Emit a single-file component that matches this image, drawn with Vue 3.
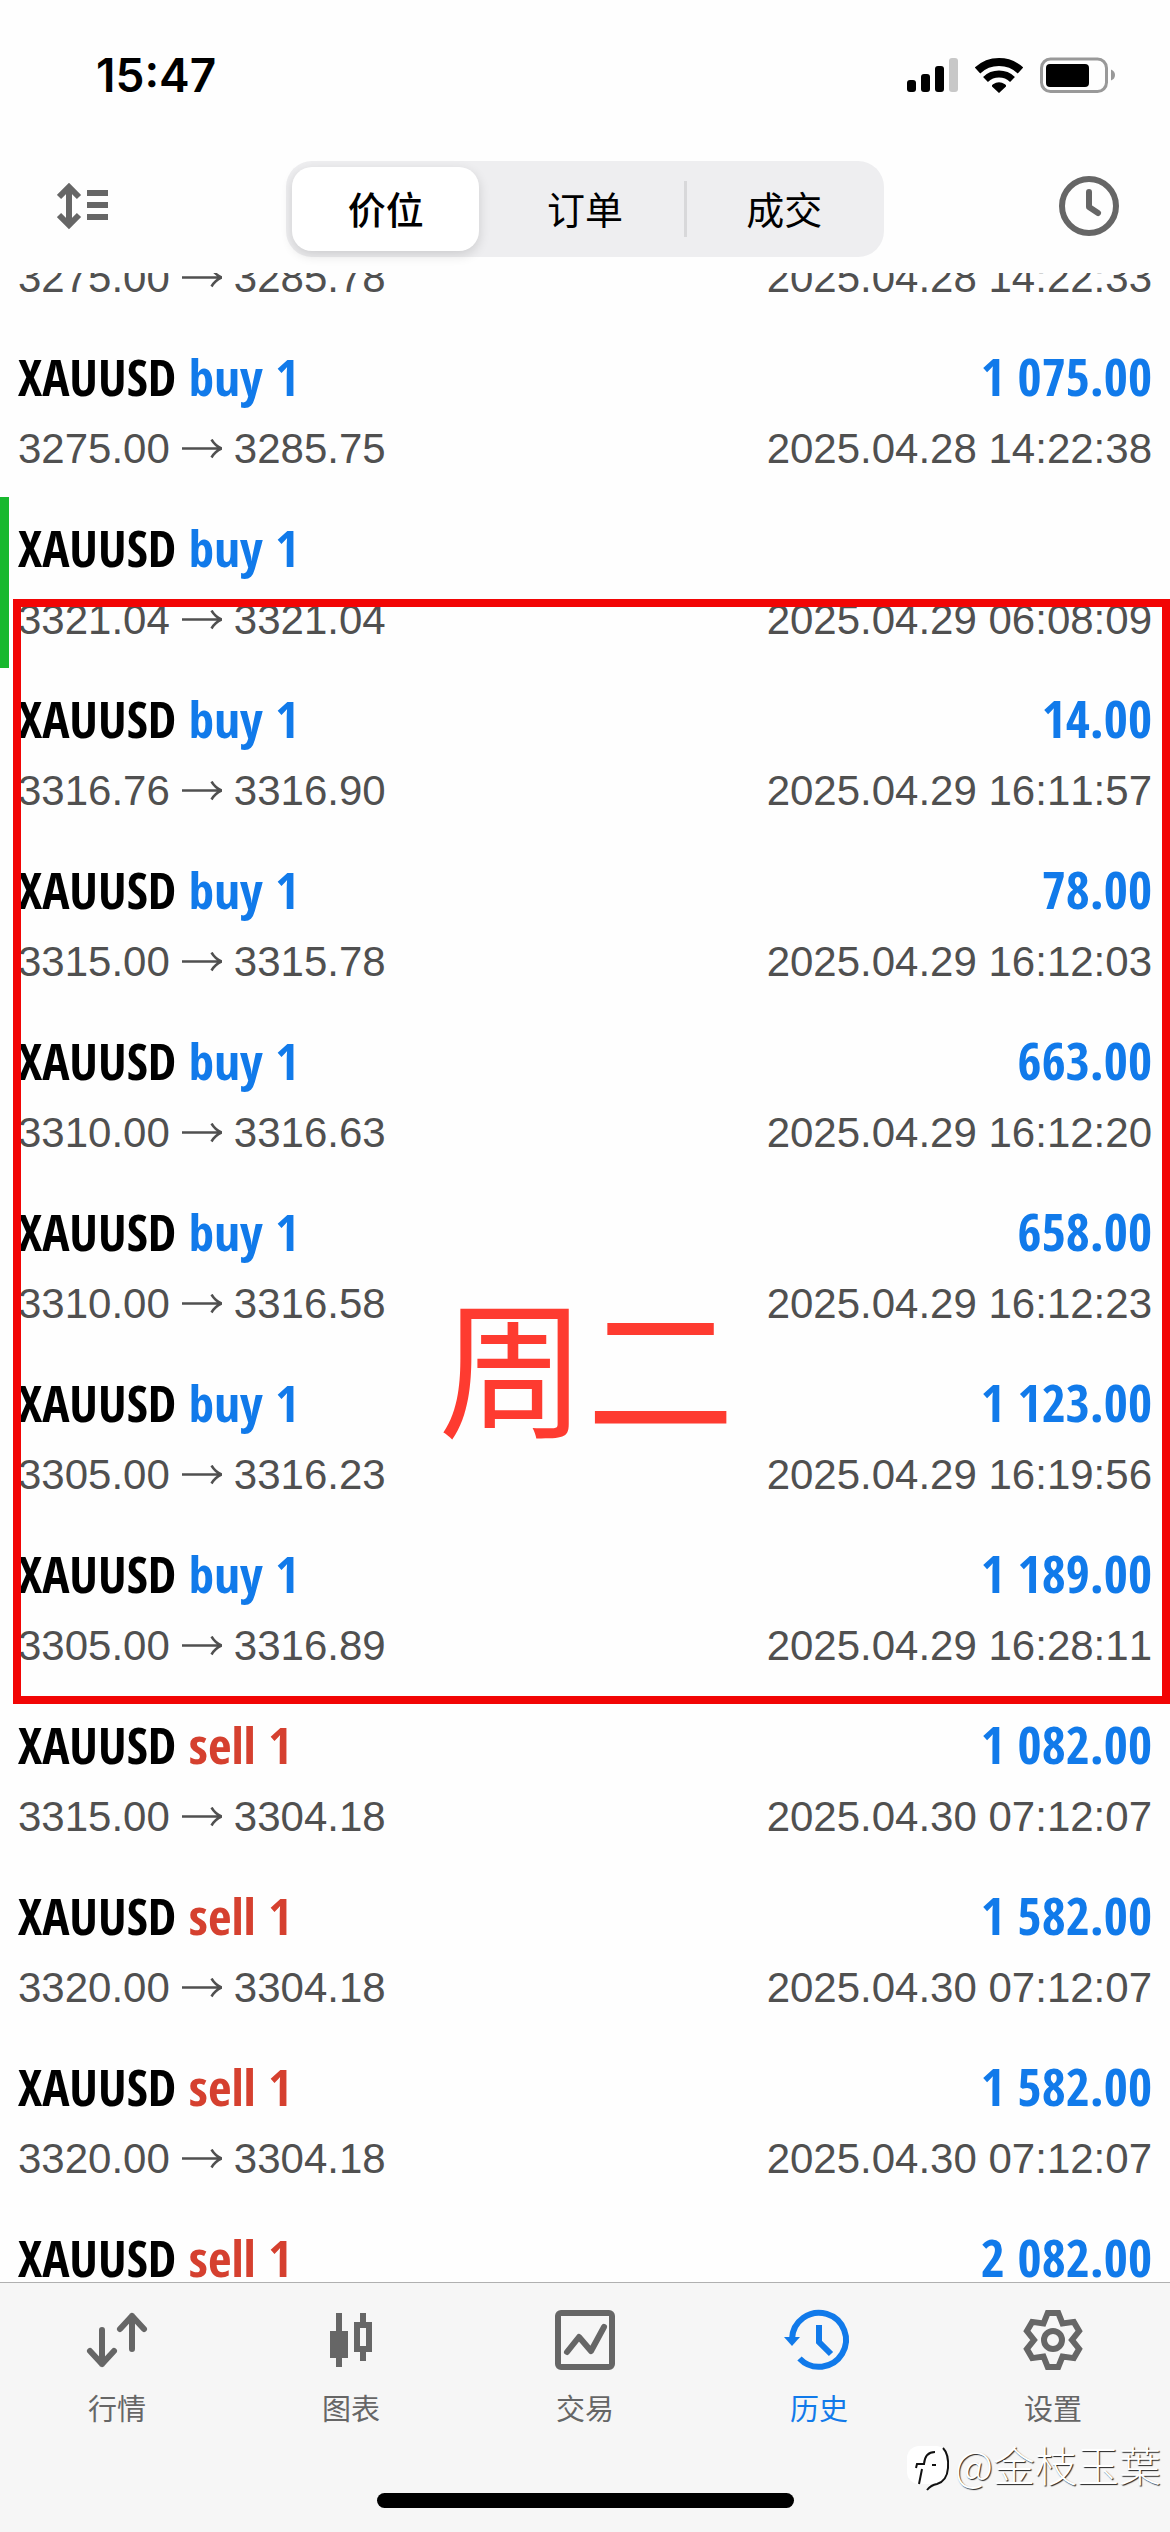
<script setup>
import { ref } from 'vue'

const segments = ['价位', '订单', '成交']
const segment = ref('价位')

const deals = [
  ['buy', '1 075.00', '3275.00', '3285.78', '2025.04.28 14:22:33'],
  ['buy', '1 075.00', '3275.00', '3285.75', '2025.04.28 14:22:38'],
  ['buy', '', '3321.04', '3321.04', '2025.04.29 06:08:09'],
  ['buy', '14.00', '3316.76', '3316.90', '2025.04.29 16:11:57'],
  ['buy', '78.00', '3315.00', '3315.78', '2025.04.29 16:12:03'],
  ['buy', '663.00', '3310.00', '3316.63', '2025.04.29 16:12:20'],
  ['buy', '658.00', '3310.00', '3316.58', '2025.04.29 16:12:23'],
  ['buy', '1 123.00', '3305.00', '3316.23', '2025.04.29 16:19:56'],
  ['buy', '1 189.00', '3305.00', '3316.89', '2025.04.29 16:28:11'],
  ['sell', '1 082.00', '3315.00', '3304.18', '2025.04.30 07:12:07'],
  ['sell', '1 582.00', '3320.00', '3304.18', '2025.04.30 07:12:07'],
  ['sell', '1 582.00', '3320.00', '3304.18', '2025.04.30 07:12:07'],
  ['sell', '2 082.00', '', '', ''],
].map(([side, profit, open, close, time]) => ({ side, profit, open, close, time }))

const tabs = [
  { id: 'quotes', label: '行情' },
  { id: 'chart', label: '图表' },
  { id: 'trade', label: '交易' },
  { id: 'history', label: '历史' },
  { id: 'settings', label: '设置' },
]
const activeTab = 'history'

// Gear outline: six teeth, each two outer corners followed by a valley
const polar = (r, deg) => {
  const a = ((deg - 90) * Math.PI) / 180
  return `${(32 + r * Math.cos(a)).toFixed(2)},${(32 + r * Math.sin(a)).toFixed(2)}`
}
const gear = [0, 60, 120, 180, 240, 300]
  .map((d) => [polar(27.6, d - 11), polar(27.6, d + 11), polar(19, d + 30)].join(' '))
  .join(' ')
</script>

<template>
  <div class="screen">
    <header class="top">
      <div class="status">
        <span class="time">15:47</span>
        <div class="status-icons">
          <svg width="51" height="36" viewBox="0 0 51 36" aria-hidden="true">
            <rect x="0" y="23" width="9" height="12" rx="3" />
            <rect x="14" y="17" width="9" height="18" rx="3" />
            <rect x="28" y="9" width="9" height="26" rx="3" />
            <rect x="42" y="1" width="9" height="34" rx="3" fill="#c8c8c8" />
          </svg>
          <svg width="48" height="36" viewBox="0 0 48 36" fill="none" stroke="#000" aria-hidden="true">
            <path d="M2.5 13.5A31.5 31.5 0 0 1 45.500 13.500" stroke-width="8" />
            <path d="M10.500 22.500A19.500 19.500 0 0 1 37.500 22.500" stroke-width="7" />
            <path d="M24 36L17 29.500Q16.500 28 18 27.200Q24 23.500 30 27.200Q31.500 28 31 29.500Z" fill="#000" stroke="none" />
          </svg>
          <svg width="75" height="36" viewBox="0 0 75 36" aria-hidden="true">
            <rect x="1.500" y="2" width="65" height="32.500" rx="9" fill="none" stroke="#999" stroke-width="3" />
            <rect x="6" y="7" width="43" height="23" rx="4" />
            <path d="M71 12.500Q75 14 75 18T71 23.500Z" fill="#999" />
          </svg>
        </div>
      </div>
      <nav class="nav">
        <button class="icon-button start" type="button" aria-label="排序">
          <svg width="51" height="48" viewBox="0 0 51 48" fill="none" stroke="#666" stroke-width="6" aria-hidden="true">
            <path d="M12 5V43M2 15L12 5L22 15M2 33L12 43L22 33M30 11H51M30 23H51M30 35H51" />
          </svg>
        </button>
        <div class="segmented">
          <button
            v-for="s in segments"
            :key="s"
            type="button"
            :class="['segment', { selected: s === segment }]"
            @click="segment = s"
          >{{ s }}</button>
        </div>
        <button class="icon-button end" type="button" aria-label="时间">
          <svg width="60" height="60" viewBox="0 0 60 60" fill="none" stroke="#666" stroke-width="6" stroke-linecap="round" stroke-linejoin="round" aria-hidden="true">
            <circle cx="30" cy="30" r="27" />
            <path d="M30 16V31L39 37" />
          </svg>
        </button>
      </nav>
    </header>

    <main class="viewport">
      <div class="history">
        <ul class="deals">
          <li v-for="(d, i) in deals" :key="i" :class="['deal', { marked: !d.profit }]">
            <div class="line title">
              <span>XAUUSD <span :class="d.side">{{ d.side }} 1</span></span>
              <span class="profit">{{ d.profit }}</span>
            </div>
            <div v-if="d.open" class="line detail">
              <span class="prices">
                {{ d.open }}
                <svg width="40" height="20" viewBox="0 0 40 20" fill="none" stroke="#505050" stroke-width="2.5" aria-hidden="true">
                  <path d="M0 9.500H38.500M29.500 0.500Q33 6.500 39.500 9.500Q33 12.500 29.500 18.500" />
                </svg>
                {{ d.close }}
              </span>
              <time>{{ d.time }}</time>
            </div>
          </li>
        </ul>
        <div class="annotation"><span>周二</span></div>
      </div>
    </main>

    <footer class="bottom">
      <nav class="tabs">
        <a v-for="t in tabs" :key="t.id" href="#" :class="['tab', { active: t.id === activeTab }]">
          <svg width="64" height="64" viewBox="0 0 64 64" fill="none" stroke="currentColor" stroke-width="6" aria-hidden="true">
            <path v-if="t.id === 'quotes'" d="M17 22V56M5 43L17 56L29 43M47 41V8M35 21L47 8L59 21" stroke-linecap="round" stroke-linejoin="round" />
            <template v-else-if="t.id === 'chart'">
              <path d="M20 5V59M44 5V15M44 43V53M38 17H50V41H38Z" />
              <rect x="11" y="23" width="18" height="27" fill="currentColor" stroke="none" />
            </template>
            <template v-else-if="t.id === 'trade'">
              <rect x="5" y="5" width="54" height="54" rx="3" />
              <path d="M14 44L26 29L38 43L51 19" stroke-linecap="round" stroke-linejoin="round" />
            </template>
            <template v-else-if="t.id === 'history'">
              <path d="M5 31A27 27 0 1 1 12.500 50.500M32 17V34L44 46" />
              <path d="M-3 29H13L5 38Z" fill="currentColor" stroke="none" />
            </template>
            <template v-else>
              <polygon :points="gear" />
              <circle cx="32" cy="32" r="9" />
            </template>
          </svg>
          <span>{{ t.label }}</span>
        </a>
      </nav>
      <div class="home-bar"></div>
      <div class="watermark">
        <svg width="44" height="48" viewBox="0 0 44 48" aria-hidden="true">
          <rect x="0" y="2" width="41" height="38" rx="12" fill="#fff" />
          <path d="M36 4Q42 10 41 24Q40 37 30 40Q24 41 20 46" fill="none" stroke="#111" stroke-width="2" />
          <path d="M28 8Q18 8 17 20H10L9 24M15 25L12 40M25 21H29" fill="none" stroke="#111" stroke-width="2" />
        </svg>
        <span>@金枝玉葉</span>
      </div>
    </footer>
  </div>
</template>

<style>
body {
  margin: 0;
  background: #fff;
}
</style>

<style scoped>
.screen {
  display: flex;
  flex-direction: column;
  height: 100vh;
  overflow: hidden;
  background: #fefefe;
  color: #000;
  font-family: "Liberation Sans", "Noto Sans CJK SC", sans-serif;
}

.status {
  display: flex;
  align-items: center;
  justify-content: space-between;
  height: 150px;
  padding: 0 55px 0 96px;
}

.time {
  font-family: Inter, sans-serif;
  font-size: 46px;
  font-weight: 600;
}

.status-icons {
  display: flex;
  gap: 17px;
}

.nav {
  display: grid;
  grid-template-columns: 1fr 56% 1fr;
  align-items: center;
  padding: 11px 51px 16px;
}

.icon-button {
  display: flex;
  padding: 0 0 6px;
  border: 0;
  background: none;
}

.start {
  justify-self: start;
  padding-left: 6px;
}

.end {
  justify-self: end;
}

.segmented {
  display: grid;
  grid-template-columns: repeat(3, 1fr);
  height: 96px;
  border-radius: 26px;
  background: #eeeef0;
}

.segment {
  position: relative;
  margin: 6px;
  padding: 0 0 2px;
  border: 0;
  border-radius: 20px;
  background: none;
  color: #000;
  font-family: "Noto Sans CJK SC", sans-serif;
  font-size: 38px;
  line-height: 56px;
}

.segment.selected {
  background: #fff;
  box-shadow: 0 4px 12px rgba(0, 0, 0, 0.14);
  font-weight: 500;
}

.segment:last-child::before {
  content: "";
  position: absolute;
  top: 14px;
  bottom: 14px;
  left: -7px;
  width: 3px;
  background: #d8d8da;
}

.viewport {
  flex: 1;
  min-height: 0;
  overflow: hidden;
}

/* The list is scrolled part of the way through its first row */
.history {
  position: relative;
  margin-top: -118px;
}

.deals {
  margin: 0;
  padding: 0;
  list-style: none;
}

.deal {
  position: relative;
  padding: 20px 18px 23px;
}

.marked::before {
  content: "";
  position: absolute;
  top: 0;
  bottom: 0;
  left: 0;
  width: 9px;
  background: #18b82e;
}

.line {
  display: flex;
  justify-content: space-between;
  white-space: nowrap;
}

.title {
  height: 60px;
  margin-bottom: 18px;
  font-family: "Open Sans Condensed", sans-serif;
  font-size: 51px;
  font-weight: 700;
  line-height: 60px;
}

.buy,
.profit {
  color: #117aea;
}

.profit {
  font-size: 52px;
}

.sell {
  color: #d5402f;
}

.detail {
  color: #505050;
  font-size: 42px;
  font-kerning: none;
  line-height: 50px;
}

.prices {
  display: flex;
  align-items: center;
  gap: 12px;
}

.annotation {
  position: absolute;
  top: 444px;
  right: 0;
  left: 13px;
  height: 1089px;
  border: 8px solid #f20505;
}

.annotation span {
  position: absolute;
  top: 681px;
  right: 10px;
  left: 0;
  color: #fe3b30;
  font-family: "Noto Sans CJK SC", sans-serif;
  font-size: 148px;
  line-height: 148px;
  text-align: center;
}

.bottom {
  position: relative;
  border-top: 1px solid #b0b0b0;
  background: #f6f6f6;
}

.tabs {
  display: grid;
  grid-template-columns: repeat(5, 1fr);
  padding-top: 25px;
}

.tab {
  display: flex;
  flex-direction: column;
  align-items: center;
  gap: 17px;
  color: #666;
  font-family: "Noto Sans CJK SC", sans-serif;
  font-size: 29px;
  line-height: 36px;
  text-decoration: none;
}

.tab svg {
  overflow: visible;
}

.active {
  color: #117aea;
}

.home-bar {
  width: 417px;
  height: 15px;
  margin: 68px auto 24px;
  border-radius: 8px;
  background: #000;
}

.watermark {
  position: absolute;
  right: 9px;
  bottom: 40px;
  display: flex;
  gap: 4px;
  color: #fff;
  font-family: "Noto Sans CJK SC", sans-serif;
  font-size: 42px;
  font-weight: 300;
  line-height: 40px;
  text-shadow: 1px 1px 1px #222;
}
</style>
